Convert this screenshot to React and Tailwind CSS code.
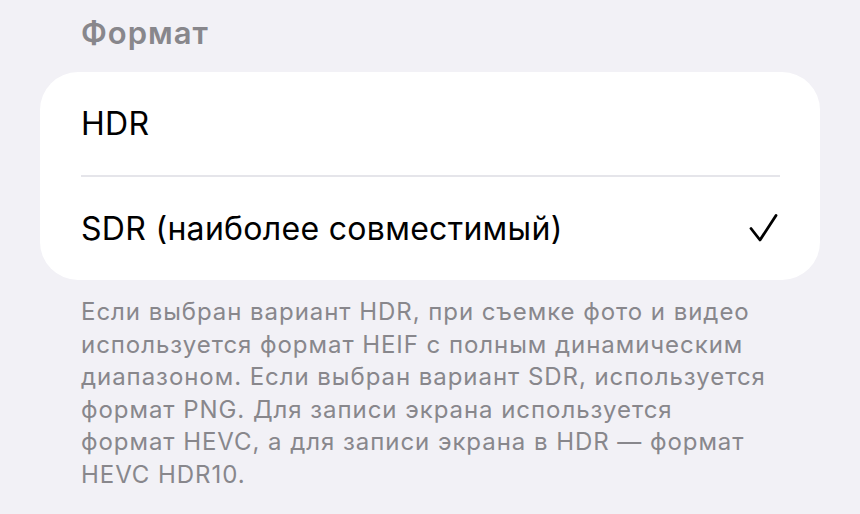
const options = [
  { label: "HDR", selected: false },
  { label: "SDR (наиболее совместимый)", selected: true },
];

const footerLines = [
  "Если выбран вариант HDR, при съемке фото и видео",
  "используется формат HEIF с полным динамическим",
  "диапазоном. Если выбран вариант SDR, используется",
  "формат PNG. Для записи экрана используется",
  "формат HEVC, а для записи экрана в HDR — формат",
  "HEVC HDR10.",
];

const Check = () => (
  <svg width="32" height="32" viewBox="0 0 32 32" fill="none">
    <path
      d="M3 15.5 L12 27 L28 2.5"
      stroke="#000"
      strokeWidth="2.8"
      strokeLinecap="round"
      strokeLinejoin="round"
    />
  </svg>
);

export default function App() {
  return (
    <div
      className="w-[860px] h-[514px] overflow-hidden bg-[#f2f1f6] px-[40px] pt-[14px]"
      style={{ fontFamily: "Inter, 'Noto Sans', sans-serif" }}
    >
      <h2 className="pl-[41px] text-[31px] font-semibold leading-[38px] text-[#88878c] tracking-[1px]">
        Формат
      </h2>

      <div className="mt-[20px] bg-white rounded-[38px] pl-[41px]">
        {options.map((o, i) => (
          <div key={o.label}>
            {i > 0 && <div className="h-[2px] bg-[#e5e5ea] mr-[40px]" />}
            <div className="flex items-center justify-between pr-[40px] h-[103px]">
              <span className="text-[32px] text-black tracking-[0.3px]">{o.label}</span>
              {o.selected && <Check />}
            </div>
          </div>
        ))}
      </div>

      <p className="pl-[41px] pt-[16px] text-[24px] leading-[32.5px] text-[#88878c] tracking-[0.95px]">
        {footerLines.map((l, i) => (
          <span key={i} className="block whitespace-nowrap">
            {l}
          </span>
        ))}
      </p>
    </div>
  );
}
